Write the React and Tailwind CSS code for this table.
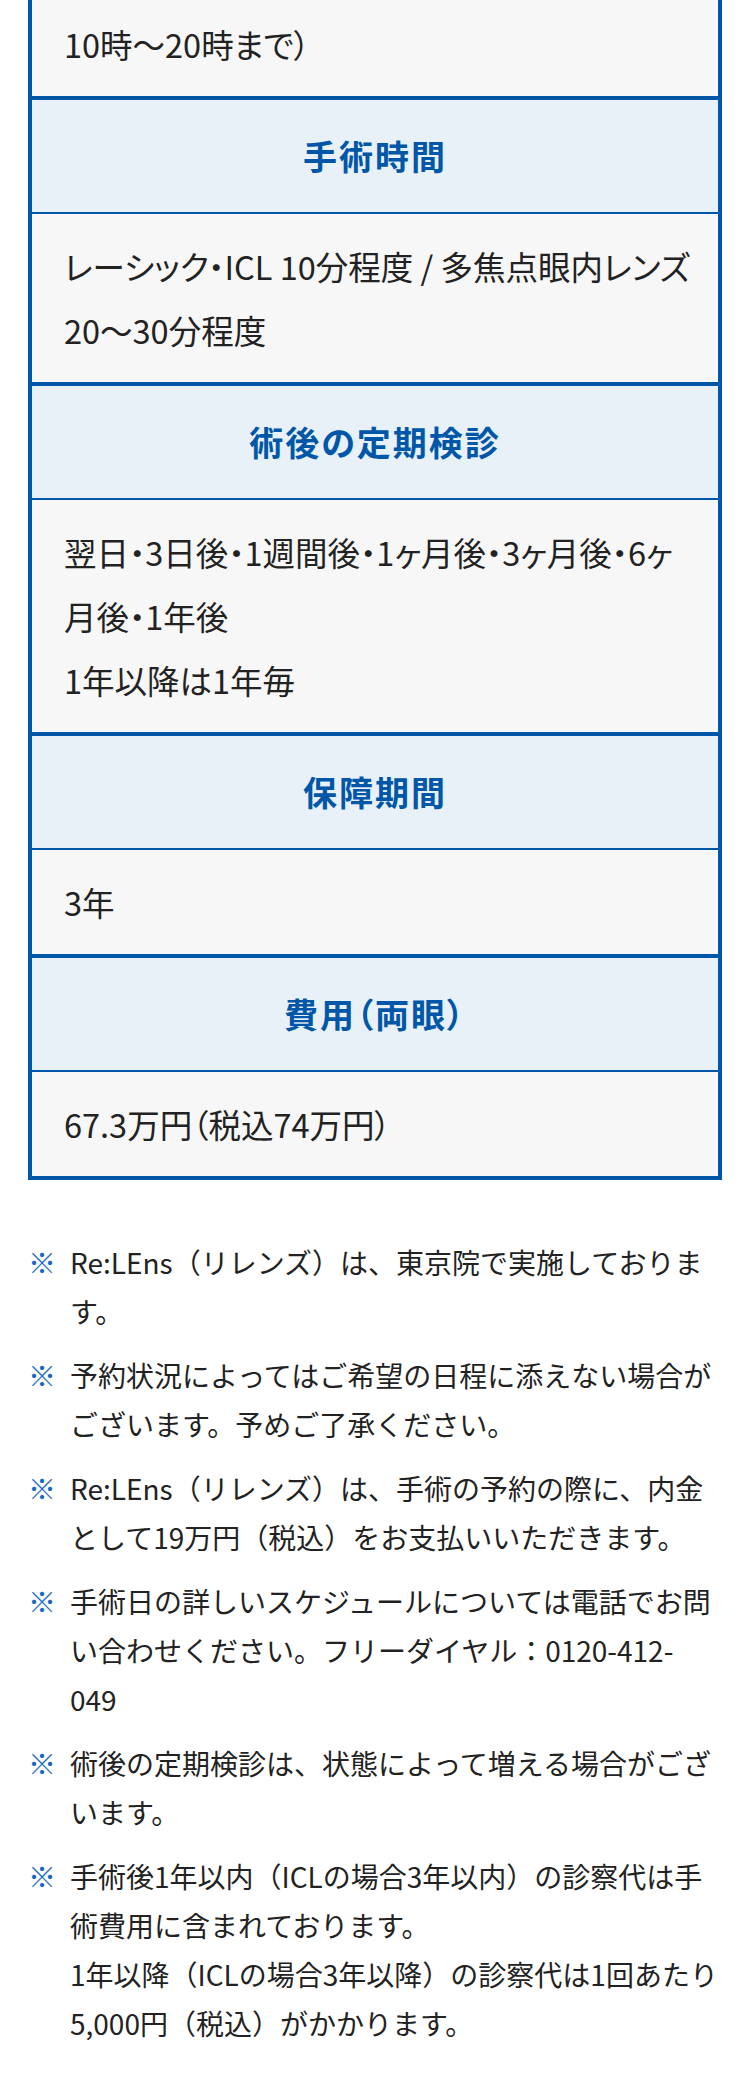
const table = [
  { head: '手術時間', body: ['レーシック・ICL 10分程度 / 多焦点眼内レンズ', '20〜30分程度'] },
  { head: '術後の定期検診', body: ['翌日・3日後・1週間後・1ヶ月後・3ヶ月後・6ヶ', '月後・1年後', '1年以降は1年毎'] },
  { head: '保障期間', body: ['3年'] },
  { head: '費用（両眼）', body: ['67.3万円（税込74万円）'] },
]

const notes = [
  ['Re:LEns（リレンズ）は、東京院で実施しております。'],
  ['予約状況によってはご希望の日程に添えない場合がございます。予めご了承ください。'],
  ['Re:LEns（リレンズ）は、手術の予約の際に、内金として19万円（税込）をお支払いいただきます。'],
  ['手術日の詳しいスケジュールについては電話でお問い合わせください。フリーダイヤル：0120-412-', '049'],
  ['術後の定期検診は、状態によって増える場合がございます。'],
  ['手術後1年以内（ICLの場合3年以内）の診察代は手術費用に含まれております。', '1年以降（ICLの場合3年以降）の診察代は1回あたり5,000円（税込）がかかります。'],
]

function HeadCell({ children }) {
  return (
    <div className="bg-[#e8f0f8] border-b-2 border-[#0057a8] py-[24px] text-center text-[34px] leading-[64px] font-bold tracking-[2px] text-[#0057a8] [font-feature-settings:'palt']">
      {children}
    </div>
  )
}

function BodyCell({ lines }) {
  return (
    <div className="bg-[#f7f7f7] border-b-4 border-[#0057a8] pl-[32px] pr-[4px] py-[20px] text-[32.5px] leading-[64px] text-[#222] whitespace-nowrap [font-feature-settings:'palt']">
      {lines.map((l, i) => (
        <p key={i}>{l}</p>
      ))}
    </div>
  )
}

export default function App() {
  return (
    <div className="w-[750px] bg-white pb-[60px] font-['Noto_Sans_CJK_JP','Noto_Sans',sans-serif]">
      <div className="mx-[28px] border-x-4 border-[#0057a8]">
        {/* first row is cut off at the top of the shot */}
        <div className="bg-[#f7f7f7] border-b-4 border-[#0057a8] px-[32px] pt-[12px] pb-[20px] text-[32.5px] leading-[64px] text-[#222] [font-feature-settings:'palt']">
          10時〜20時まで）
        </div>
        {table.map((r) => (
          <div key={r.head}>
            <HeadCell>{r.head}</HeadCell>
            <BodyCell lines={r.body} />
          </div>
        ))}
      </div>

      <ul className="mt-[58px] pl-[28px] pr-[26px] text-[28px] leading-[49px] text-[#222]">
        {notes.map((n, i) => (
          <li key={i} className="flex mb-[15px]">
            <span className="w-[42px] shrink-0 text-[#1768c4]">※</span>
            <div>
              {n.map((l, j) => (
                <p key={j}>{l}</p>
              ))}
            </div>
          </li>
        ))}
      </ul>
    </div>
  )
}
